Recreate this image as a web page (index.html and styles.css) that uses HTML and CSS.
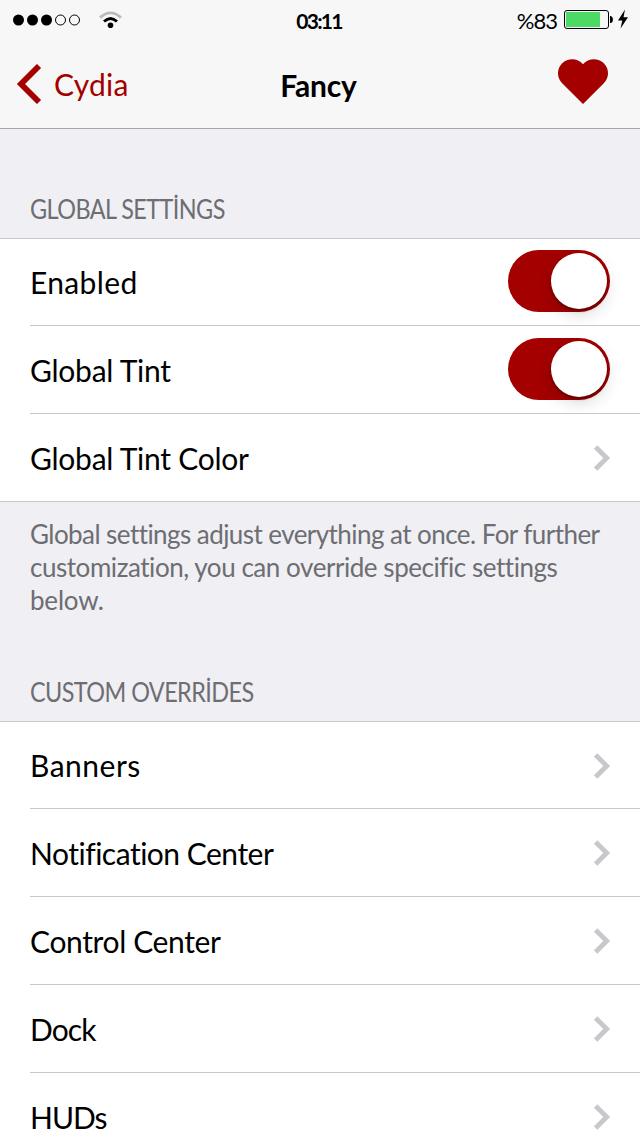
FILE: index.html
```
<!DOCTYPE html>
<html lang="en">
<head>
<meta charset="utf-8">
<title>Fancy</title>
<link rel="stylesheet" href="styles.css">
</head>
<body>
<svg class="defs" width="0" height="0" aria-hidden="true">
  <symbol id="chevron" viewBox="0 0 18 26"><path d="M2.600 2 L13.700 13 L2.600 24" fill="none" stroke="#c7c7cc" stroke-width="4.800"/></symbol>
</svg>
<header class="top">
  <div class="status">
    <div class="status-left">
      <svg class="signal" width="68" height="12" viewBox="0 0 68 12">
        <g><circle cx="5.500" cy="6" r="5.500"/><circle cx="19.500" cy="6" r="5.500"/><circle cx="33.500" cy="6" r="5.500"/></g>
        <g fill="none" stroke="#000" stroke-width="1"><circle cx="47.500" cy="6" r="5"/><circle cx="61.500" cy="6" r="5"/></g>
      </svg>
      <svg class="wifi" width="24" height="18" viewBox="0 0 24 18">
        <path d="M1 6.600 Q11.500 -2.800 22 6.600" fill="none" stroke="#bbb" stroke-width="2.800"/>
        <path d="M5 10.600 Q11.500 4.400 18 10.600" fill="none" stroke="#000" stroke-width="2.800"/>
        <circle cx="11.500" cy="14.200" r="2.800"/>
      </svg>
    </div>
    <span class="time">03:11</span>
    <div class="status-right">
      <span class="percent">%83</span>
      <svg class="battery" width="64" height="22" viewBox="0 0 64 22">
        <rect x=".5" y="1.500" width="44" height="18" rx="2.500" fill="#f7f7f7" stroke="#000"/>
        <rect x="2" y="3" width="34" height="15" fill="#4cd964"/>
        <path d="M46 7 h1 q2 1 2 3.500 t-2 3.500 h-1z"/>
        <path d="M61 0.500 L54 11.500 H58.300 L56.500 19.500 L64 8.300 H59.500z"/>
      </svg>
    </div>
  </div>
  <nav class="nav">
    <a class="back">
      <svg width="26" height="40" viewBox="0 0 26 40"><path d="M23 2 L5 20 L23 38" fill="none" stroke="#a40000" stroke-width="5.800"/></svg>
      <span class="back-label">Cydia</span>
    </a>
    <h1 class="title">Fancy</h1>
    <svg class="heart" width="50" height="46" viewBox="0 0 50 46"><path d="M25 45 L4.200 24.200 C-1.400 18.600 -1.400 9.600 4.200 4.200 C9.800 -1.200 19.600 -1.200 25 5.200 C30.400 -1.200 40.200 -1.200 45.800 4.200 C51.400 9.600 51.400 18.600 45.800 24.200 Z" fill="#a40000"/></svg>
  </nav>
</header>
<main>
  <h2 class="heading heading-first"><span class="caps">GLOBAL SETTİNGS</span></h2>
  <ul class="group">
    <li class="row"><span class="label-enabled">Enabled</span><i class="switch"></i></li>
    <li class="row"><span class="label-tint">Global Tint</span><i class="switch"></i></li>
    <li class="row"><span class="label-tint">Global Tint Color</span><svg class="chevron"><use href="#chevron"/></svg></li>
  </ul>
  <p class="note"><span class="note-first">Global settings adjust everything at once. For further</span><br>customization, you can override specific settings<br><span class="note-last">below.</span></p>
  <h2 class="heading"><span class="caps">CUSTOM OVERRİDES</span></h2>
  <ul class="group">
    <li class="row"><span class="label-banners">Banners</span><svg class="chevron"><use href="#chevron"/></svg></li>
    <li class="row"><span class="label-notification">Notification Center</span><svg class="chevron"><use href="#chevron"/></svg></li>
    <li class="row"><span class="label-control">Control Center</span><svg class="chevron"><use href="#chevron"/></svg></li>
    <li class="row"><span class="label-dock">Dock</span><svg class="chevron"><use href="#chevron"/></svg></li>
    <li class="row"><span class="label-huds">HUDs</span><svg class="chevron"><use href="#chevron"/></svg></li>
  </ul>
</main>
</body>
</html>
```
FILE: styles.css
```
* { box-sizing: border-box; }
html { overflow: hidden; }
body { margin: 0; width: 640px; height: 1136px; overflow: hidden; background: #efeff4; color: #000; font-family: Lato, "Noto Sans", sans-serif; }
svg { display: block; flex: none; }
.defs { position: absolute; }
.top { height: 129px; background: #f7f7f7; border-bottom: 1px solid #a7a7aa; }
.status { height: 40px; display: grid; grid-template-columns: 1fr auto 1fr; align-items: center; padding: 0 12px 0 13px; }
.status-left { display: flex; align-items: center; gap: 18px; margin-top: -1px; }
.signal { margin-top: 1px; }
.status-right { display: flex; justify-content: flex-end; align-items: center; gap: 7px; }
.time { font-size: 21px; font-weight: 700; line-height: 38px; letter-spacing: -1.7px; margin-left: -3px; padding-top: 2px; }
.percent { font-size: 22px; line-height: 38px; letter-spacing: -1px; padding-top: 2px; }
.battery { margin-top: 0; }
.nav { height: 88px; display: grid; grid-template-columns: 1fr auto 1fr; align-items: center; padding: 0 32px 0 16px; }
.back { display: flex; align-items: center; gap: 12px; color: #a40000; font-size: 30px; letter-spacing: .2px; }
.title { margin: 0 -5px 0 8px; padding-top: 1px; font-size: 30px; font-weight: 700; letter-spacing: -.2px; }
.heart { justify-self: end; margin-top: -5px; }
.heading { margin: 0; height: 111px; padding: 0 30px 13px; display: flex; align-items: flex-end; font-size: 26px; line-height: 32px; font-weight: 400; color: #6d6d72; }
.heading-first { height: 109px; }
.caps { transform: scaleX(.9); transform-origin: left; letter-spacing: -.62px; }
.group { list-style: none; margin: 0; padding: 0 0 0 30px; background: #fff; border-top: 1px solid #c8c7cc; border-bottom: 1px solid #c8c7cc; }
.row { height: 88px; display: flex; align-items: center; justify-content: space-between; padding: 0 30px 0 0; border-bottom: 1px solid #c8c7cc; font-size: 30px; white-space: nowrap; }
.row:first-child { height: 87px; }
.row:last-child { height: 87px; border-bottom: 0; }
.label-enabled { letter-spacing: .35px; }
.label-tint { letter-spacing: -.25px; }
.label-banners { letter-spacing: .5px; }
.label-notification { letter-spacing: -.5px; }
.label-control { letter-spacing: -.36px; }
.label-dock { letter-spacing: -.9px; }
.label-huds { letter-spacing: -1px; }
.chevron { width: 18px; height: 26px; margin: 1px -1px 0 0; }
.switch { position: relative; width: 102px; height: 62px; border-radius: 31px; background: #a40000; margin-top: -1px; }
.row:first-child .switch { margin-top: -2px; }
.switch::after { content: ""; position: absolute; right: 3px; top: 3px; width: 56px; height: 56px; border-radius: 50%; background: #fff; box-shadow: 0 6px 16px rgba(0,0,0,.15), 0 2px 3px rgba(0,0,0,.35); }
.note { margin: 0; height: 108px; padding: 16px 0 0 30px; font-size: 26px; line-height: 33px; color: #6d6d72; white-space: nowrap; letter-spacing: -.45px; }
.note-first { letter-spacing: -.56px; }
.note-last { letter-spacing: -.2px; }
```
